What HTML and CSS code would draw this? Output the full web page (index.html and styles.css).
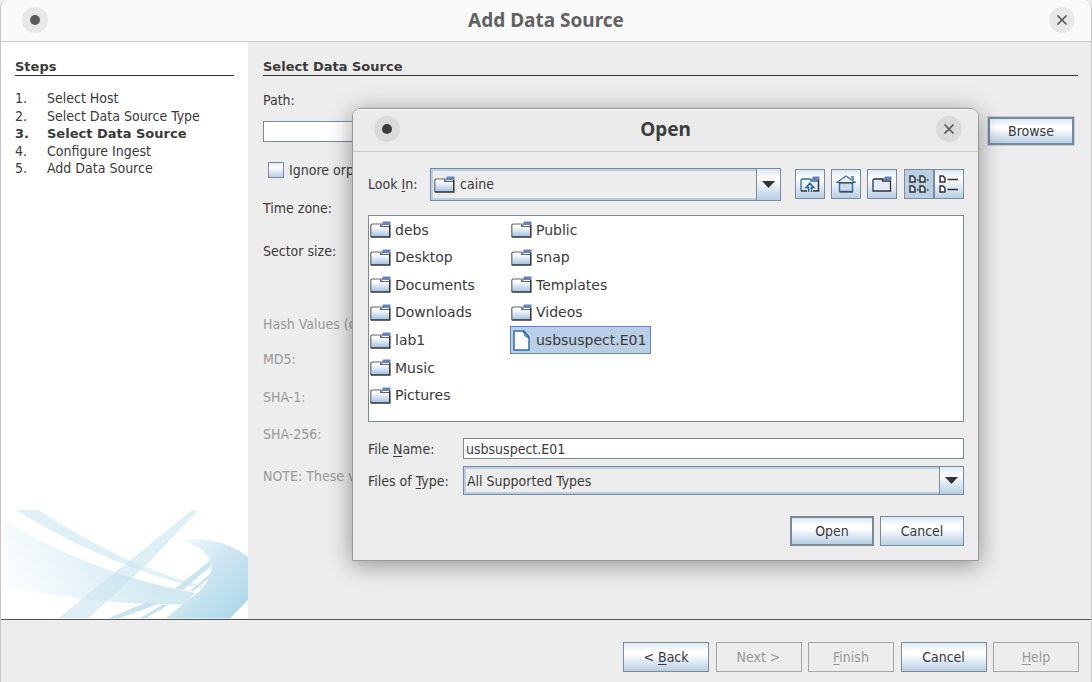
FILE: index.html
```html
<!DOCTYPE html>
<html lang="en">
<head>
<meta charset="utf-8">
<title>Add Data Source</title>
<link rel="stylesheet" href="styles.css">
</head>
<body>
<svg class="defs" width="0" height="0" aria-hidden="true">
  <defs>
    <linearGradient id="fold" x1="0" y1="0" x2="0" y2="1"><stop offset="0.2" stop-color="#fff"/><stop offset="1" stop-color="#9dbfe2"/></linearGradient>
    <symbol id="folder" viewBox="0 0 21 17">
      <path d="M1 15V4L2 3H11L12 5H20V16H1Z" fill="url(#fold)"/>
      <path d="M.8 16V4L2 3H11L10.500 5.500H19" fill="none" stroke="#666" stroke-width="1.2"/>
      <path d="M19.800 4V16H.8" fill="none" stroke="#333" stroke-width="1.5"/>
      <path d="M11 5L13 .5H20.500V4H13L12 5Z" fill="#6382bf"/>
    </symbol>
  </defs>
</svg>
<div class="window">
  <header class="titlebar">
    <button class="round menu" aria-label="Window menu"><svg width="26" height="26" viewBox="0 0 26 26"><circle cx="13" cy="13" r="5" fill="#5b5b5b"/></svg></button>
    <h1>Add Data Source</h1>
    <button class="round close" aria-label="Close"><svg width="26" height="26" viewBox="0 0 26 26"><path d="M8.500 8.500L17.500 17.500M17.500 8.500L8.500 17.500" stroke="#555" stroke-width="1.6"/></svg></button>
  </header>
  <div class="body">
    <aside class="steps">
      <h2>Steps</h2>
      <ol>
        <li><span>1.</span>Select Host</li>
        <li><span>2.</span>Select Data Source Type</li>
        <li class="current"><span>3.</span>Select Data Source</li>
        <li><span>4.</span>Configure Ingest</li>
        <li><span>5.</span>Add Data Source</li>
      </ol>
      <svg class="swoosh" viewBox="0 0 248 109" aria-hidden="true">
        <defs>
          <linearGradient id="band" gradientUnits="userSpaceOnUse" x1="20" y1="85" x2="130" y2="30"><stop offset="0" stop-color="#fafdfe"/><stop offset="1" stop-color="#d3e9f2"/></linearGradient>
          <linearGradient id="arc" x1="0" y1="0" x2="1" y2="1"><stop offset="0.1" stop-color="#f2f9fc"/><stop offset="0.45" stop-color="#cfe7f1"/><stop offset="1" stop-color="#a8d5e8"/></linearGradient>
        </defs>
        <path d="M3 11C65 47 130 72 195 83L185 95C110 95 60 87 3 77Z" fill="url(#band)"/>
        <path d="M15 0H38C95 37 145 62 206 77L203 79C150 68 75 38 15 0Z" fill="#d6ebf4" opacity=".75"/>
        <path d="M57 109L192 0H198L150 51L88 109Z" fill="#c9e5f0" opacity=".6"/>
        <path d="M175 79L211 50L210 57L183 80ZM190 81L211 63L209 68L194 81Z" fill="#c8e4ef"/>
        <path d="M107 109L146 93L159 94L118 109ZM139 109L162 95L169 95L145 109Z" fill="#c8e4ef"/>
        <path d="M182 31C206 26 231 34 248 47V90L230 109H165L185 93L199 82C208 72 213 62 211 52C205 40 194 34 182 31Z" fill="url(#arc)"/>
      </svg>
    </aside>
    <main class="panel">
      <h2>Select Data Source</h2>
      <label class="path-label" for="path">Path:</label>
      <div class="path-row"><input id="path" type="text"><button class="btn focus">Browse</button></div>
      <label class="orphan"><input type="checkbox">Ignore orp</label>
      <p class="zone">Time zone:</p>
      <p class="sector">Sector size:</p>
      <div class="hash">
        <p>Hash Values (o</p>
        <p>MD5:</p>
        <p>SHA-1:</p>
        <p>SHA-256:</p>
        <p>NOTE: These v</p>
      </div>
    </main>
  </div>
  <footer class="actions">
    <div class="buttons">
      <button class="btn">&lt; <u>B</u>ack</button>
      <button class="btn" disabled>Next &gt;</button>
      <button class="btn" disabled><u>F</u>inish</button>
      <button class="btn">Cancel</button>
      <button class="btn" disabled><u>H</u>elp</button>
    </div>
  </footer>
</div>

<section class="dialog" role="dialog" aria-labelledby="open-title">
  <header class="titlebar">
    <button class="round menu" aria-label="Window menu"><svg width="26" height="26" viewBox="0 0 26 26"><circle cx="13" cy="13" r="5" fill="#3d3d3d"/></svg></button>
    <h1 id="open-title">Open</h1>
    <button class="round close" aria-label="Close"><svg width="26" height="26" viewBox="0 0 26 26"><path d="M8.500 8.500L17.500 17.500M17.500 8.500L8.500 17.500" stroke="#555" stroke-width="1.6"/></svg></button>
  </header>
  <div class="chooser">
    <div class="look">
      <label for="look">Look <u>I</u>n:</label>
      <div class="combo tall">
        <svg class="combo-icon" width="21" height="17"><use href="#folder"/></svg>
        <select id="look"><option>caine</option></select>
        <span class="arrow"><svg width="13" height="7" viewBox="0 0 13 7"><path d="M0 0H13L6.500 7Z" fill="#333"/></svg></span>
      </div>
      <div class="tools">
        <button class="tool" aria-label="Up one level"><svg width="20" height="18" viewBox="0 0 20 18"><path d="M1 16V5L2 4H10L11 6H18" fill="none" stroke="#2f6da6" stroke-width="1.3"/><path d="M18.500 5V16H13M1 16H7" fill="none" stroke="#333" stroke-width="1.5"/><path d="M11 5L13 1.500H19.500V5Z" fill="#6382bf"/><path d="M8.500 17V12.500H6L10 8L14 12.500H11.500V17" fill="#b9d3ea" stroke="#2f5f91" stroke-width="1.3"/></svg></button>
        <button class="tool" aria-label="Home"><svg width="20" height="18" viewBox="0 0 20 18"><path d="M3.500 8V16.500H16.500V8" fill="#c9dcef" stroke="#3a70a8" stroke-width="1.5"/><path d="M.8 7.500L10 1L19.200 7.500Z" fill="#eef4fa" stroke="#3a70a8" stroke-width="1.2"/><path d="M3 8H17M4 17H17" stroke="#333" stroke-width="1.2"/><path d="M15 2H17V5" fill="none" stroke="#3a70a8" stroke-width="1.5"/></svg></button>
        <button class="tool" aria-label="New folder"><svg width="20" height="18" viewBox="0 0 20 18"><path d="M1 16V5L2 4H11L10.500 6H18.500V16H1Z" fill="#e3ecf6" stroke="#333" stroke-width="1.300"/><path d="M11 5.500L13 1.500H19.500V5Z" fill="#6382bf"/></svg></button>
        <div class="views">
          <button class="tool on" aria-label="List view"><svg width="20" height="18" viewBox="0 0 20 18"><g fill="#d8e4f1" stroke="#333" stroke-width="1.500"><path d="M1 1H4L6 3V7H1ZM11 1H14L16 3V7H11ZM1 11H4L6 13V17H1ZM11 11H14L16 13V17H11Z"/></g><path d="M8 5H9.500M18 5H19.500M8 15H9.500M18 15H19.500" stroke="#333" stroke-width="1.500"/></svg></button>
          <button class="tool" aria-label="Details view"><svg width="20" height="18" viewBox="0 0 20 18"><g fill="#fff" stroke="#333" stroke-width="1.500"><path d="M1 1H4L6 3V7H1ZM1 11H4L6 13V17H1Z"/></g><path d="M8.500 4.500H19M8.500 14.500H19" stroke="#333" stroke-width="1.500"/></svg></button>
        </div>
      </div>
    </div>
    <ul class="files">
      <li><svg width="21" height="17"><use href="#folder"/></svg>debs</li>
      <li><svg width="21" height="17"><use href="#folder"/></svg>Desktop</li>
      <li><svg width="21" height="17"><use href="#folder"/></svg>Documents</li>
      <li><svg width="21" height="17"><use href="#folder"/></svg>Downloads</li>
      <li><svg width="21" height="17"><use href="#folder"/></svg>lab1</li>
      <li><svg width="21" height="17"><use href="#folder"/></svg>Music</li>
      <li><svg width="21" height="17"><use href="#folder"/></svg>Pictures</li>
      <li><svg width="21" height="17"><use href="#folder"/></svg>Public</li>
      <li><svg width="21" height="17"><use href="#folder"/></svg>snap</li>
      <li><svg width="21" height="17"><use href="#folder"/></svg>Templates</li>
      <li><svg width="21" height="17"><use href="#folder"/></svg>Videos</li>
      <li class="selected"><svg width="21" height="21" viewBox="0 0 21 21"><path d="M3 1H13L18 7V20H3Z" fill="#fff" stroke="#336ea8" stroke-width="1.500"/><path d="M12 1L14 6L18 8Z" fill="#b8cfe5" stroke="#336ea8"/></svg>usbsuspect.E01</li>
    </ul>
    <div class="fields">
      <label for="name">File <u>N</u>ame:</label>
      <input id="name" type="text" value="usbsuspect.E01">
      <label for="type">Files of <u>T</u>ype:</label>
      <div class="combo">
        <select id="type"><option>All Supported Types</option></select>
        <span class="arrow"><svg width="13" height="7" viewBox="0 0 13 7"><path d="M0 0H13L6.500 7Z" fill="#333"/></svg></span>
      </div>
    </div>
    <div class="confirm">
      <button class="btn default">Open</button>
      <button class="btn">Cancel</button>
    </div>
  </div>
</section>
</body>
</html>
```
FILE: styles.css
```css
* { box-sizing: border-box; }
body, h1, h2, p, ol, ul { margin: 0; padding: 0; }
body { background: #ededed; color: #3a3a3a; font: 14px/18px "DejaVu Sans Condensed", "DejaVu Sans", sans-serif; font-stretch: condensed; }
ol, ul { list-style: none; }
button, input, select { font: inherit; color: inherit; margin: 0; border-radius: 0; }
u { text-underline-offset: 2px; }
.defs { position: absolute; }

.window { min-height: 100vh; display: flex; flex-direction: column; border: 1px solid #c6c6c6; border-width: 0 1px; border-radius: 8px 8px 0 0; overflow: hidden; }
.titlebar { display: grid; grid-template-columns: 1fr auto 1fr; align-items: center; height: 42px; padding: 0 16px 2px; background: #fafafa; border-bottom: 1px solid #c8c8c8; }
.titlebar h1 { font: 700 19px/24px "Noto Sans", sans-serif; color: #626262; }
.round { width: 26px; height: 26px; padding: 0; border: 0; border-radius: 50%; background: #e8e8e8; }
.round svg { display: block; }
.menu { margin-left: 5px; }
.close { justify-self: end; }

.body { flex: 1; display: flex; }
h2 { font: 700 13px/16px "DejaVu Sans", sans-serif; border-bottom: 1px solid #333; }
.steps { width: 247px; flex: none; display: flex; flex-direction: column; background: #fff; padding-top: 17px; }
.steps h2 { margin: 0 14px; }
.steps ol { display: grid; grid-template-rows: repeat(5, 1fr); height: 88px; margin: 14px 14px 0; }
.steps li { display: flex; line-height: 17px; }
.steps li span { width: 32px; }
.current { font: 700 13px/17px "DejaVu Sans", sans-serif; }
.swoosh { display: block; width: 100%; margin-top: auto; }

.panel { flex: 1; min-width: 0; padding: 17px 13px 0 15px; }
.path-label { display: block; margin-top: 15px; }
.path-row { display: flex; align-items: center; justify-content: space-between; height: 30px; margin-top: 7px; padding-right: 4px; }
input[type="text"] { height: 21px; border: 1px solid #7a8a99; padding: 0 2px; background: #fff; }
.path-row input { width: 600px; }
.btn { width: 86px; height: 30px; padding: 0; border: 1px solid #7a8a99; background: linear-gradient(#dde8f3, #fff 30%, #fff 40%, #b8cfe5); }
.btn:disabled { background: none; border-color: #a5a5a5; color: #999; }
.focus { height: 28px; outline: 1px solid #b8cfe5; }
.focus, .default { border-width: 2px; }
.orphan { display: flex; align-items: center; gap: 5px; margin: 15px 0 0 5px; }
.orphan input { appearance: none; width: 16px; height: 16px; margin: 0; border: 1px solid #7a8a99; background: linear-gradient(#dde8f3, #fff 30%, #b8cfe5); }
.zone { margin-top: 20px; }
.sector { margin-top: 25px; }
.hash { margin-top: 55px; display: grid; grid-template-rows: 35px 38px 37px 42px auto; color: #999; }

.actions { display: flex; justify-content: flex-end; height: 63px; padding: 22px 12px 0; border-top: 1px solid #555; }
.buttons { display: flex; justify-content: space-between; width: 456px; }

.dialog { position: absolute; left: 352px; top: 108px; width: 627px; background: #ededed; border: 1px solid #999; border-radius: 9px 9px 0 0; box-shadow: 0 4px 24px rgba(0,0,0,.4); }
.dialog .titlebar { height: 43px; background: #ebebeb; border-radius: 8px 8px 0 0; box-shadow: inset 0 1px #fafafa; }
.dialog .titlebar h1 { color: #3d3d3d; }
.dialog .round { background: #dadada; }
.chooser { padding: 16px 14px 14px 15px; }
.look { display: flex; align-items: center; height: 32px; }
.look label { width: 62px; }
.combo { flex: 1; display: flex; align-items: center; height: 29px; border: 1px solid #7a8a99; background: #ededed; box-shadow: inset 0 0 0 2px #b8cfe5; }
.combo.tall { height: 33px; }
.combo-icon { margin-left: 3px; }
.combo select { flex: 1; min-width: 0; appearance: none; border: 0; padding: 0 3px; background: none; }
.combo.tall select { padding: 0 5px; }
.arrow { align-self: stretch; width: 24px; display: flex; align-items: center; justify-content: center; border-left: 1px solid #7a8a99; background: linear-gradient(#dde8f3, #fff 30%, #b8cfe5); }
.tools { display: flex; gap: 6px; margin-left: 14px; }
.views { display: flex; margin-left: 1px; }
.tool { width: 30px; height: 30px; padding: 0; border: 1px solid #7a8a99; background: linear-gradient(#dde8f3, #fff 30%, #b8cfe5); display: flex; align-items: center; justify-content: center; }
.tool.on { background: #b8cfe5; }

.files { display: grid; grid-template-rows: repeat(7, 1fr); grid-auto-flow: column; grid-auto-columns: 141px; height: 207px; margin-top: 15px; padding-bottom: 12px; background: #fff; border: 1px solid #7a8a99; font: 14px/18px "DejaVu Sans", sans-serif; }
.files li { display: flex; align-items: center; gap: 4px; border: 1px solid transparent; white-space: nowrap; }
.files .selected { background: #b8cfe5; border-color: #6382bf; }

.fields { display: grid; grid-template-columns: 95px 1fr; align-items: center; row-gap: 7px; margin-top: 16px; }
.confirm { display: flex; justify-content: flex-end; gap: 6px; margin-top: 21px; }
.confirm .btn { width: 84px; }
```
